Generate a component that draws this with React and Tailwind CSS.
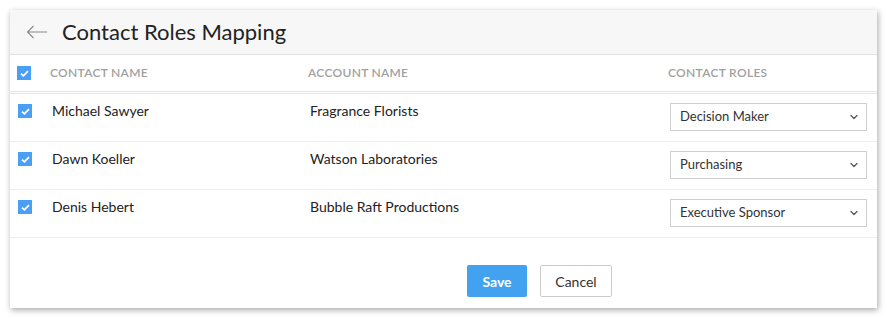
import { ChevronDown } from 'lucide-react'

const rows = [
  { name: 'Michael Sawyer', account: 'Fragrance Florists', role: 'Decision Maker' },
  { name: 'Dawn Koeller', account: 'Watson Laboratories', role: 'Purchasing' },
  { name: 'Denis Hebert', account: 'Bubble Raft Productions', role: 'Executive Sponsor' },
]

const CheckBox = () => (
  <span className="flex h-[14px] w-[14px] items-center justify-center bg-[#4a9ff5]">
    <svg width="9" height="7" viewBox="0 0 9 7" fill="none">
      <path d="M1 3.6 L3.4 5.8 L8 1.2" stroke="white" strokeWidth="1.8" />
    </svg>
  </span>
)

const App = () => {
  return (
    <div className="h-[318px] w-[887px] bg-white pl-[10px] pt-[10px] font-['Lato',sans-serif]">
      <div className="flex h-[298px] w-[867px] flex-col bg-white shadow-[1px_2px_6px_rgba(0,0,0,0.35)]">
        <div className="flex h-[45px] items-center border-b border-[#e2e2e2] bg-[#f7f7f7]">
          <svg className="ml-[16px]" width="22" height="14" viewBox="0 0 22 14" fill="none">
            <path d="M21 7 H1.5 M7.5 1 L1.5 7 L7.5 13" stroke="#888" strokeWidth="1.1" />
          </svg>
          <h1 className="ml-[14px] text-[22px] leading-none text-[#222]">Contact Roles Mapping</h1>
        </div>

        <div className="flex h-[37px] items-center border-b border-[#e4e4e4] text-[12px] font-semibold tracking-[0.3px] text-[#a0a0a0]">
          <div className="ml-[7px] w-[33px]">
            <CheckBox />
          </div>
          <div className="w-[258px]">CONTACT NAME</div>
          <div className="w-[360px]">ACCOUNT NAME</div>
          <div>CONTACT ROLES</div>
        </div>

        <div className="mt-[1px] border-t border-[#e4e4e4]">
          {rows.map((r) => (
            <div key={r.name} className="flex h-[48px] items-start border-b border-[#eeeeee] text-[14px] text-[#222]">
              <div className="ml-[8px] mt-[10px] w-[34px]">
                <CheckBox />
              </div>
              <div className="mt-[7px] w-[258px] leading-[20px]">{r.name}</div>
              <div className="mt-[7px] w-[360px] leading-[20px]">{r.account}</div>
              <div className="mt-[9px] flex h-[28px] w-[197px] items-center justify-between border border-[#cfcfcf] pl-[9px] pr-[6px] text-[13px] text-[#333]">
                <span>{r.role}</span>
                <ChevronDown size={12} strokeWidth={2.5} className="text-[#555]" />
              </div>
            </div>
          ))}
        </div>

        <div className="mt-[27px] flex gap-[13px] pl-[457px]">
          <button className="h-[32px] w-[60px] rounded-[2px] bg-[#42a2ef] text-[14px] font-bold text-white">Save</button>
          <button className="h-[32px] w-[72px] rounded-[2px] border border-[#cccccc] bg-white text-[14px] text-[#333]">Cancel</button>
        </div>
      </div>
    </div>
  )
}

export default App
